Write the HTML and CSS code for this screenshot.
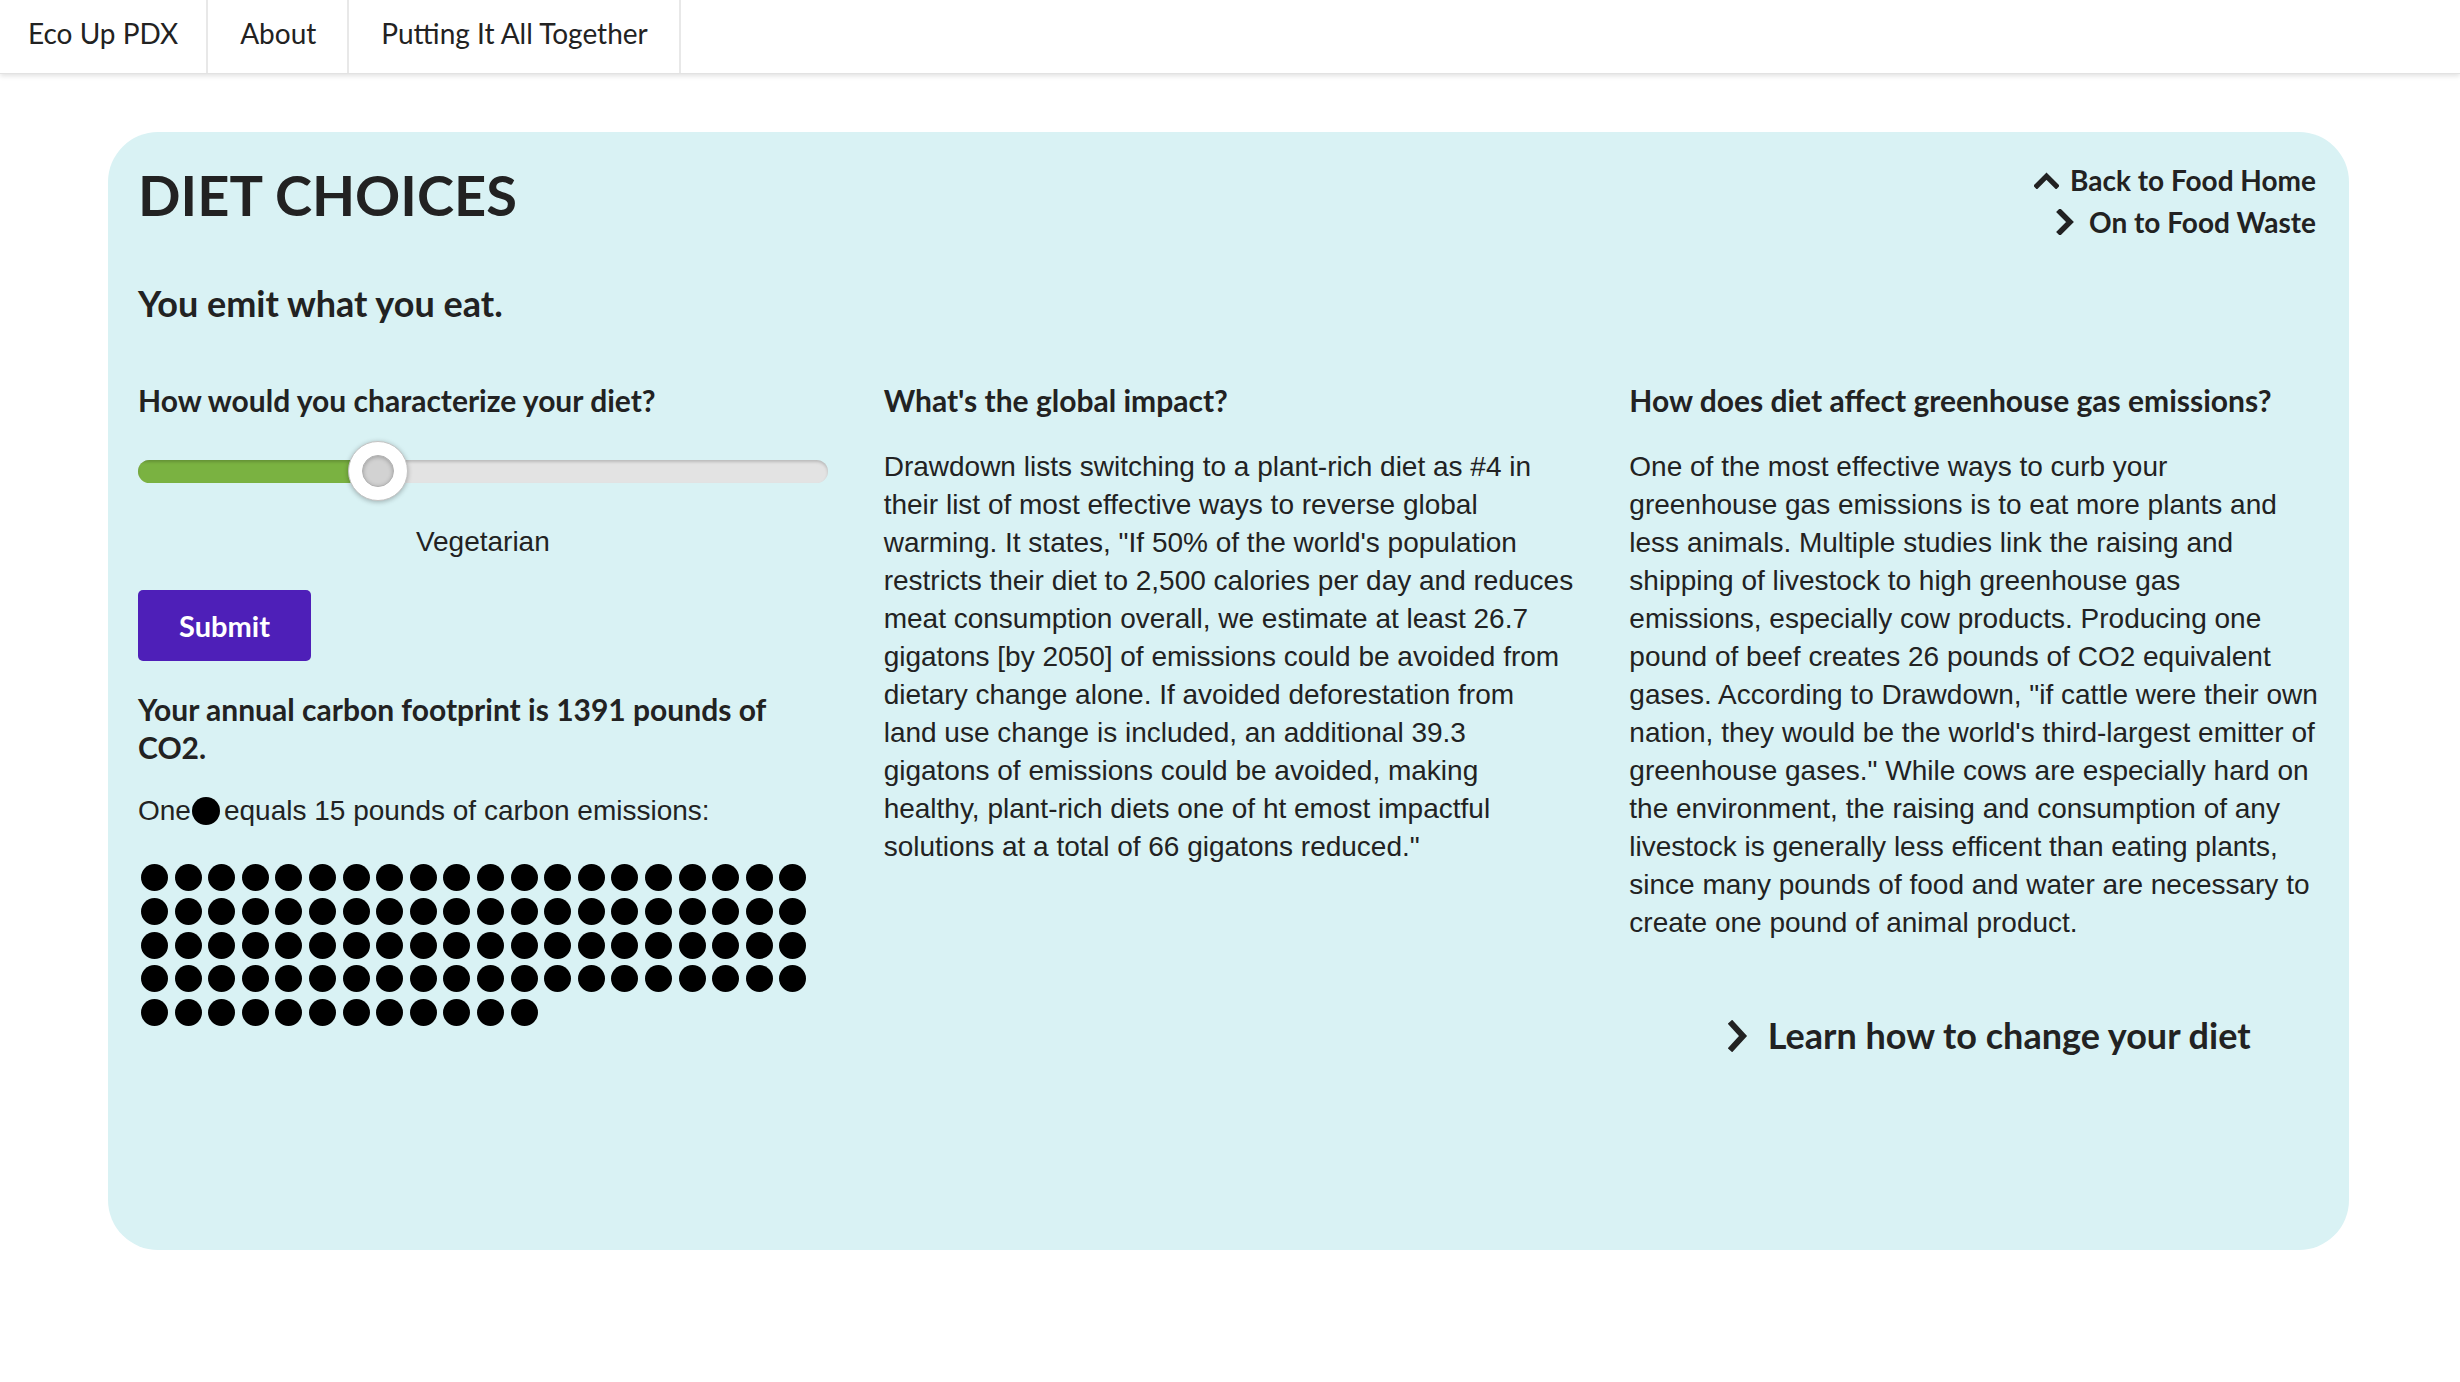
FILE: index.html
```html
<!DOCTYPE html>
<html lang="en">
<head>
<meta charset="utf-8">
<title>Diet Choices - Eco Up PDX</title>
<link rel="stylesheet" href="styles.css">
</head>
<body>
<nav class="topnav">
  <a class="topnav-item" href="#">Eco Up PDX</a>
  <a class="topnav-item" href="#">About</a>
  <a class="topnav-item" href="#">Putting It All Together</a>
</nav>
<main class="page">
  <section class="card">
    <header class="card-head">
      <h1 class="title">DIET CHOICES</h1>
      <div class="side-links">
        <a class="side-link" href="#"><svg class="chev chev-up" viewBox="0 0 26 18" aria-hidden="true"><path d="M3 15 L13 5 L23 15" /></svg>Back to Food Home</a>
        <a class="side-link" href="#"><svg class="chev chev-right" viewBox="0 0 18 26" aria-hidden="true"><path d="M4 3 L14 13 L4 23" /></svg>On to Food Waste</a>
      </div>
    </header>
    <h2 class="tagline">You emit what you eat.</h2>
    <div class="cols">
      <div class="col">
        <h3 class="col-title">How would you characterize your diet?</h3>
        <div class="slider">
          <div class="slider-track">
            <div class="slider-fill" style="width: 34.8%"></div>
          </div>
          <div class="slider-thumb" style="left: calc(34.8% - 30px)"><span class="slider-thumb-core"></span></div>
        </div>
        <p class="slider-label">Vegetarian</p>
        <button class="submit" type="button">Submit</button>
        <p class="footprint">Your annual carbon footprint is 1391 pounds of CO2.</p>
        <p class="legend">One<span class="legend-dot"></span>equals 15 pounds of carbon emissions:</p>
        <div class="dots">
          <span class="dot"></span><span class="dot"></span><span class="dot"></span><span class="dot"></span><span class="dot"></span><span class="dot"></span><span class="dot"></span><span class="dot"></span><span class="dot"></span><span class="dot"></span>
          <span class="dot"></span><span class="dot"></span><span class="dot"></span><span class="dot"></span><span class="dot"></span><span class="dot"></span><span class="dot"></span><span class="dot"></span><span class="dot"></span><span class="dot"></span>
          <span class="dot"></span><span class="dot"></span><span class="dot"></span><span class="dot"></span><span class="dot"></span><span class="dot"></span><span class="dot"></span><span class="dot"></span><span class="dot"></span><span class="dot"></span>
          <span class="dot"></span><span class="dot"></span><span class="dot"></span><span class="dot"></span><span class="dot"></span><span class="dot"></span><span class="dot"></span><span class="dot"></span><span class="dot"></span><span class="dot"></span>
          <span class="dot"></span><span class="dot"></span><span class="dot"></span><span class="dot"></span><span class="dot"></span><span class="dot"></span><span class="dot"></span><span class="dot"></span><span class="dot"></span><span class="dot"></span>
          <span class="dot"></span><span class="dot"></span><span class="dot"></span><span class="dot"></span><span class="dot"></span><span class="dot"></span><span class="dot"></span><span class="dot"></span><span class="dot"></span><span class="dot"></span>
          <span class="dot"></span><span class="dot"></span><span class="dot"></span><span class="dot"></span><span class="dot"></span><span class="dot"></span><span class="dot"></span><span class="dot"></span><span class="dot"></span><span class="dot"></span>
          <span class="dot"></span><span class="dot"></span><span class="dot"></span><span class="dot"></span><span class="dot"></span><span class="dot"></span><span class="dot"></span><span class="dot"></span><span class="dot"></span><span class="dot"></span>
          <span class="dot"></span><span class="dot"></span><span class="dot"></span><span class="dot"></span><span class="dot"></span><span class="dot"></span><span class="dot"></span><span class="dot"></span><span class="dot"></span><span class="dot"></span>
          <span class="dot"></span><span class="dot"></span>
        </div>
      </div>
      <div class="col">
        <h3 class="col-title">What's the global impact?</h3>
        <p class="body-text">Drawdown lists switching to a plant-rich diet as #4 in their list of most effective ways to reverse global warming. It states, "If 50% of the world's population restricts their diet to 2,500 calories per day and reduces meat consumption overall, we estimate at least 26.7 gigatons [by 2050] of emissions could be avoided from dietary change alone. If avoided deforestation from land use change is included, an additional 39.3 gigatons of emissions could be avoided, making healthy, plant-rich diets one of ht emost impactful solutions at a total of 66 gigatons reduced."</p>
      </div>
      <div class="col">
        <h3 class="col-title">How does diet affect greenhouse gas emissions?</h3>
        <p class="body-text">One of the most effective ways to curb your greenhouse gas emissions is to eat more plants and less animals. Multiple studies link the raising and shipping of livestock to high greenhouse gas emissions, especially cow products. Producing one pound of beef creates 26 pounds of CO2 equivalent gases. According to Drawdown, "if cattle were their own nation, they would be the world's third-largest emitter of greenhouse gases." While cows are especially hard on the environment, the raising and consumption of any livestock is generally less efficent than eating plants, since many pounds of food and water are necessary to create one pound of animal product.</p>
        <div class="learn-wrap">
          <a class="learn" href="#"><svg class="chev chev-learn" viewBox="0 0 20 32" aria-hidden="true"><path d="M4 4 L15 16 L4 28" /></svg>Learn how to change your diet</a>
        </div>
      </div>
    </div>
  </section>
</main>
</body>
</html>
```
FILE: styles.css
```css
* { box-sizing: border-box; }

html, body {
  margin: 0;
  padding: 0;
  background: #ffffff;
}

body {
  font-family: Lato, "Noto Sans", sans-serif;
  color: #222222;
}

a { color: inherit; text-decoration: none; }

/* top navigation */
.topnav {
  display: flex;
  height: 74px;
  background: #ffffff;
  border-bottom: 1px solid #e2e2e2;
  box-shadow: 0 2px 5px rgba(0, 0, 0, 0.12);
}

.topnav-item {
  display: flex;
  align-items: center;
  padding: 0 31px 8px 32px;
  font-size: 28px;
  color: #222222;
  border-right: 2px solid #e8e8e8;
}

.topnav-item:first-child {
  padding-left: 28px;
  padding-right: 28px;
}

/* page + card */
.page {
  padding: 58px 111px 0 108px;
}

.card {
  background: #d9f2f4;
  border-radius: 50px;
  min-height: 1118px;
  padding: 23px 30px 40px 30px;
}

.card-head {
  display: flex;
  justify-content: space-between;
  align-items: flex-start;
}

.title {
  margin: 6px 0 0 0;
  font-size: 56px;
  line-height: 1.2;
  font-weight: 700;
}

.side-links {
  display: flex;
  flex-direction: column;
  align-items: flex-end;
  margin-top: 4px;
  padding-right: 3px;
}

.side-link {
  display: flex;
  align-items: center;
  font-size: 28px;
  font-weight: 700;
  line-height: 42px;
}

.chev {
  fill: none;
  stroke: #222222;
  stroke-linecap: square;
  stroke-linejoin: miter;
}

.chev-up {
  width: 25px;
  height: 18px;
  stroke-width: 5.5;
  margin-right: 11px;
}

.chev-right {
  width: 18px;
  height: 26px;
  stroke-width: 5.5;
  margin-right: 15px;
}

.tagline {
  margin: 39px 0 0 0;
  font-size: 36px;
  line-height: 1.2;
  font-weight: 700;
}

.cols {
  display: grid;
  grid-template-columns: repeat(3, 1fr);
  column-gap: 56px;
  margin-top: 57px;
}

.col-title {
  margin: 0;
  font-size: 30px;
  line-height: 1.2;
  font-weight: 700;
}

/* slider */
.slider {
  position: relative;
  height: 60px;
  margin-top: 23px;
  display: flex;
  align-items: center;
}

.slider-track {
  width: 100%;
  height: 23px;
  border-radius: 12px;
  background: #e3e3e3;
  box-shadow: inset 0 2px 3px rgba(0, 0, 0, 0.18);
  overflow: hidden;
}

.slider-fill {
  height: 100%;
  background: #7ab241;
  box-shadow: inset 0 2px 3px rgba(0, 0, 0, 0.18);
}

.slider-thumb {
  position: absolute;
  top: 0;
  width: 60px;
  height: 60px;
  border-radius: 50%;
  background: #ffffff;
  border: 1px solid #c4c4c4;
  box-shadow: 0 1px 5px rgba(0, 0, 0, 0.28);
  display: flex;
  align-items: center;
  justify-content: center;
}

.slider-thumb-core {
  width: 32px;
  height: 32px;
  border-radius: 50%;
  background: #d2d2d2;
  border: 1px solid #b0b0b0;
  box-shadow: inset 0 1px 4px rgba(0, 0, 0, 0.25);
}

.slider-label {
  margin: 22px 0 0 0;
  text-align: center;
  font-family: "Liberation Sans", Arial, sans-serif;
  font-size: 28px;
  line-height: 38px;
}

.submit {
  display: block;
  margin-top: 29px;
  width: 173px;
  height: 71px;
  border: none;
  border-radius: 5px;
  background: #4e1fb8;
  color: #ffffff;
  font-family: Lato, "Noto Sans", sans-serif;
  font-size: 29px;
  font-weight: 700;
  padding: 0;
}

.footprint {
  margin: 29px 0 0 0;
  font-size: 30px;
  line-height: 38px;
  font-weight: 700;
  padding-right: 30px;
}

.legend {
  margin: 26px 0 0 0;
  font-family: "Liberation Sans", Arial, sans-serif;
  font-size: 28px;
  line-height: 38px;
  display: flex;
  align-items: center;
}

.legend-dot {
  display: inline-block;
  width: 28px;
  height: 28px;
  border-radius: 50%;
  background: #000000;
  margin: 0 4px 0 1px;
}

.dots {
  display: flex;
  flex-wrap: wrap;
  column-gap: 6.6px;
  row-gap: 6.7px;
  margin-top: 34px;
  padding-left: 3px;
}

.dot {
  width: 27px;
  height: 27px;
  border-radius: 50%;
  background: #000000;
}

/* text columns */
.body-text {
  margin: 30px 0 0 0;
  font-family: "Liberation Sans", Arial, sans-serif;
  font-size: 28px;
  line-height: 38px;
}

.learn-wrap {
  display: flex;
  justify-content: center;
  margin-top: 72px;
  padding-left: 30px;
}

.learn {
  display: flex;
  align-items: center;
  font-size: 36px;
  line-height: 1.2;
  font-weight: 700;
}

.chev-learn {
  width: 20px;
  height: 32px;
  stroke-width: 6;
  margin-right: 20px;
}
```
